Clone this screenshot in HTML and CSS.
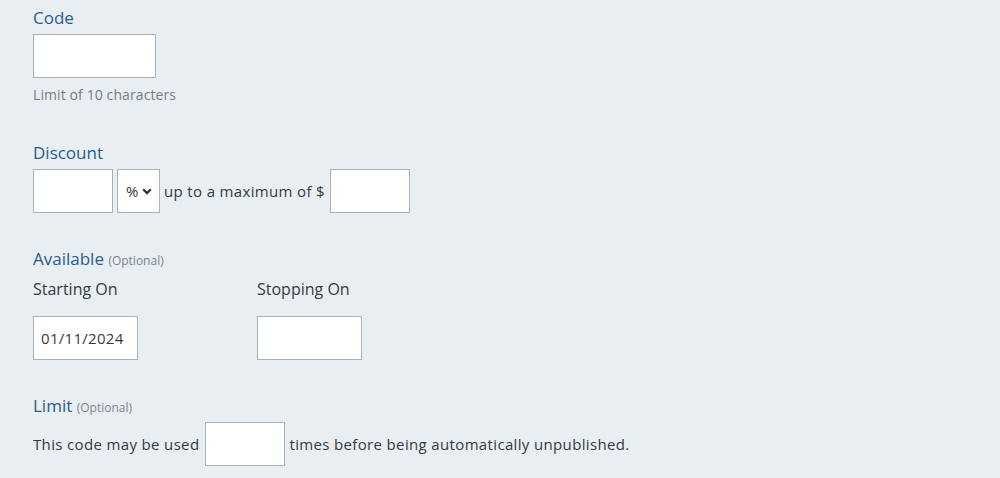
FILE: index.html
```html
<!DOCTYPE html>
<html>
<head>
<title>Coupon</title>
<link rel="stylesheet" href="styles.css">
</head>
<body>
<form class="coupon">
    <div class="field">
        <label class="label" for="code">Code</label>
        <input class="box box-code" id="code" type="text">
        <p class="hint">Limit of 10 characters</p>
    </div>

    <div class="field">
        <label class="label" for="amount">Discount</label>
        <div class="row">
            <input class="box box-small" id="amount" type="text">
            <span class="pick">
                <select class="pick-select">
                    <option>%</option>
                    <option>$</option>
                </select>
                <svg class="pick-arrow" width="10" height="7" viewBox="0 0 10 7"><path d="M1.2 1.3 5 5.1 8.8 1.3" fill="none" stroke="#2b2f33" stroke-width="2.2"/></svg>
            </span>
            <span class="text">up to a maximum of $</span>
            <input class="box box-small" type="text">
        </div>
    </div>

    <div class="field">
        <div class="label">Available <span class="optional">(Optional)</span></div>
        <div class="dates">
            <div class="date">
                <label class="sublabel" for="start">Starting On</label>
                <input class="box box-date" id="start" type="text" value="01/11/2024">
            </div>
            <div class="date">
                <label class="sublabel" for="stop">Stopping On</label>
                <input class="box box-date" id="stop" type="text">
            </div>
        </div>
    </div>

    <div class="field">
        <div class="label">Limit <span class="optional">(Optional)</span></div>
        <div class="row">
            <span class="text">This code may be used</span>
            <input class="box box-small box-times" type="text">
            <span class="text">times before being automatically unpublished.</span>
        </div>
    </div>
</form>
</body>
</html>
```

FILE: styles.css
```css
* {
    margin: 0;
    padding: 0;
    box-sizing: border-box;
}

body {
    background: #e9eef3;
    font-family: "Open Sans", Lato, sans-serif;
    color: #343b42;
}

.coupon {
    padding: 6px 33px;
}

.field {
    margin-bottom: 34px;
}

.label {
    display: block;
    font-size: 17px;
    line-height: 24px;
    color: #2a5d8a;
    margin-bottom: 4px;
}

.optional {
    font-size: 12px;
    line-height: 1;
    color: #7b858f;
}

.box {
    display: block;
    height: 44px;
    border: 1px solid #a7b2bd;
    background: #fff;
    font-family: inherit;
    font-size: 15px;
    letter-spacing: 0.3px;
    color: #343b42;
    padding: 0 7px;
    outline: none;
}

.box-code {
    width: 123px;
}

.box-small {
    width: 80px;
}

.box-date {
    width: 105px;
}

.hint {
    font-size: 14px;
    line-height: 20px;
    letter-spacing: 0.1px;
    margin-top: 7px;
    padding-bottom: 2px;
    color: #737d87;
}

.row {
    display: flex;
    align-items: center;
    gap: 4px;
}

.text {
    font-size: 15px;
    letter-spacing: 0.35px;
}

.text + .box {
    margin-left: 1px;
}

.text + .box-times {
    margin-left: 2px;
}

.pick {
    position: relative;
    display: block;
}

.pick-select {
    display: block;
    width: 43px;
    height: 44px;
    appearance: none;
    border: 1px solid #a7b2bd;
    background: #fff;
    font-family: inherit;
    font-size: 15px;
    color: #343b42;
    padding: 0 0 0 8px;
    border-radius: 0;
    outline: none;
}

.pick-arrow {
    position: absolute;
    right: 8px;
    top: 19px;
    pointer-events: none;
}

.dates {
    display: flex;
}

.date {
    width: 224px;
}

.sublabel {
    display: block;
    font-size: 16px;
    line-height: 24px;
    margin-top: 2px;
    margin-bottom: 15px;
}
```
